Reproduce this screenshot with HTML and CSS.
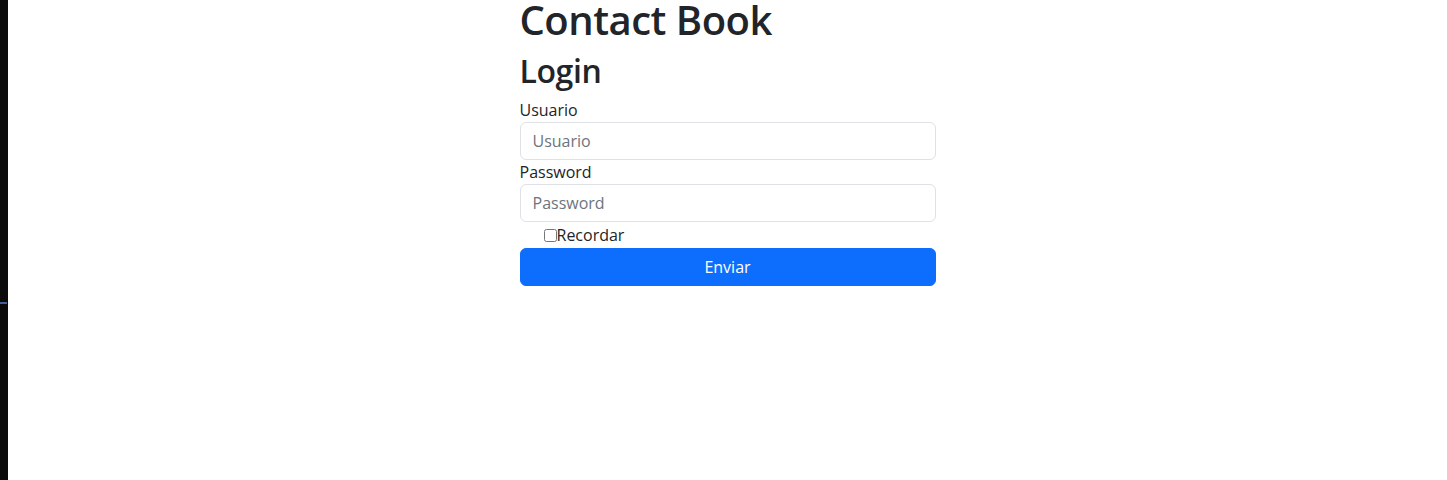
FILE: index.html
```html
<!DOCTYPE html>
<html lang="es">
<head>
<meta charset="utf-8">
<title>Contact Book</title>
<link rel="stylesheet" href="styles.css">
</head>
<body>
<div class="layout">
  <aside class="sidebar"><span class="sidebar-mark"></span></aside>
  <main class="main">
    <div class="container">
      <h1 class="title">Contact Book</h1>
      <h2 class="subtitle">Login</h2>
      <form class="login-form">
        <label class="form-label" for="usuario">Usuario</label>
        <input class="form-control" id="usuario" type="text" placeholder="Usuario">
        <label class="form-label" for="password">Password</label>
        <input class="form-control" id="password" type="password" placeholder="Password">
        <div class="form-check">
          <input class="check-input" id="recordar" type="checkbox"><label class="check-label" for="recordar">Recordar</label>
        </div>
        <button class="btn-primary" type="submit">Enviar</button>
      </form>
    </div>
  </main>
</div>
</body>
</html>
```

FILE: styles.css
```css
* { box-sizing: border-box; }
html, body { margin: 0; height: 100%; }
body {
  background: #fff;
  color: #212529;
  font-family: "Open Sans", "Noto Sans", sans-serif;
  font-size: 16px;
  line-height: 1.5;
}
.layout {
  display: flex;
  min-height: 100vh;
}
.sidebar {
  width: 8px;
  flex: 0 0 8px;
  background: #0b0b0b;
  display: flex;
  flex-direction: column;
  padding-top: 302px;
}
.sidebar-mark {
  display: block;
  height: 2px;
  width: 7px;
  background: #44609c;
}
.main {
  flex: 1;
  display: flex;
  justify-content: center;
}
.container {
  width: 416px;
}
.title {
  margin: 0 0 12px;
  font-size: 40px;
  line-height: 40px;
  font-weight: 600;
  letter-spacing: -0.5px;
}
.subtitle {
  margin: 0 0 8px;
  font-size: 32px;
  line-height: 1.2;
  font-weight: 600;
  letter-spacing: -0.4px;
}
.login-form {
  display: flex;
  flex-direction: column;
}
.form-label {
  display: block;
  line-height: 24px;
}
.form-control {
  display: block;
  width: 100%;
  height: 38px;
  padding: 6px 12px;
  font: inherit;
  color: #212529;
  background: #fff;
  border: 1px solid #dee2e6;
  border-radius: 6px;
}
.form-control::placeholder { color: #6c757d; }
.form-check {
  display: flex;
  align-items: center;
  padding-left: 24px;
  height: 26px;
}
.check-input {
  margin: 0;
  width: 13px;
  height: 13px;
}
.check-label { line-height: 24px; }
.btn-primary {
  height: 38px;
  width: 100%;
  font: inherit;
  color: #fff;
  background: #0d6efd;
  border: 1px solid #0d6efd;
  border-radius: 6px;
  padding: 6px 12px;
}
```
